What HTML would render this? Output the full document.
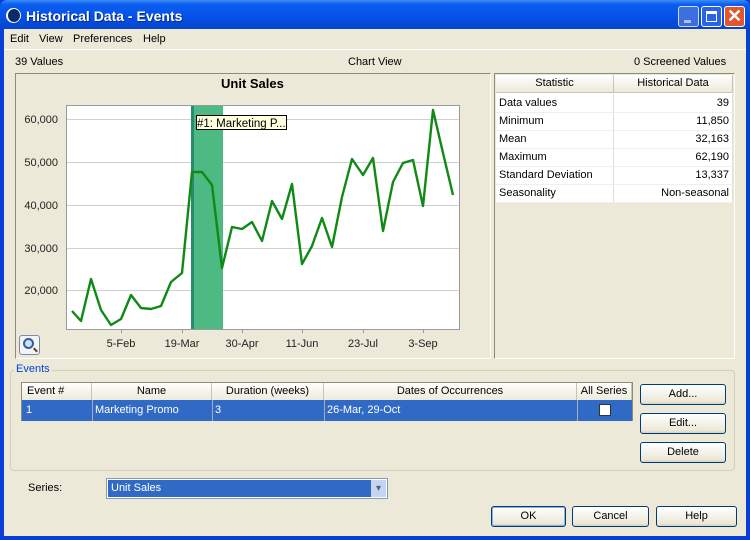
<!DOCTYPE html>
<html><head><style>
*{margin:0;padding:0;box-sizing:border-box}
body{width:750px;height:540px;overflow:hidden;font-family:"Liberation Sans",sans-serif;font-size:11px;color:#000;background:#0a3fd6;position:relative}
.a{position:absolute}
.win{left:4px;top:29px;width:742px;height:507px;background:#ece9d8}
.title{left:0;top:0;width:750px;height:30px;background:linear-gradient(#3d8cf5 0,#0a5ef0 15%,#0550e6 60%,#0443c8 100%);border-radius:7px 7px 0 0}
.btn{background:linear-gradient(#fff,#ece9d8 85%,#d6d0c0);border:1px solid #003c74;border-radius:3px;text-align:center;line-height:18px}
.th{background:linear-gradient(#fff,#ebeadb);border-right:1px solid #c7c5b2;border-bottom:1px solid #c7c5b2;text-align:center;line-height:17px;height:18px;position:absolute;top:0}
td{padding:0 3px;height:18px;border-bottom:1px solid #f0efe8;border-right:1px solid #e0dfd6}
</style></head><body>
<div class="a title"></div>
<div class="a" style="left:6px;top:8px;width:15px;height:15px;border-radius:50%;background:#fff;"></div>
<div class="a" style="left:8px;top:9px;width:12px;height:13px;border-radius:50%;background:#0a2a6a;"></div>
<div class="a" style="left:26px;top:8px;color:#fff;font-size:14px;font-weight:bold;text-shadow:1px 1px #0a2a8a">Historical Data - Events</div>
<div class="a" style="left:678px;top:6px;width:21px;height:21px;border:1px solid #fff;border-radius:3px;background:#4a77e0;opacity:.8"><div class="a" style="left:5px;top:13px;width:7px;height:3px;background:#dde"></div></div>
<div class="a" style="left:701px;top:6px;width:21px;height:21px;border:1px solid #fff;border-radius:3px;background:#2a62e8"><div class="a" style="left:4px;top:4px;width:11px;height:11px;border:1px solid #fff;border-top-width:3px"></div></div>
<div class="a" style="left:724px;top:6px;width:21px;height:21px;border:1px solid #fff;border-radius:3px;background:#e0562f;color:#fff;font-size:18px;font-weight:bold;text-align:center;line-height:19px">✕</div>
<div class="a win"></div>
<div class="a" style="left:10px;top:33px">Edit</div>
<div class="a" style="left:39px;top:33px">View</div>
<div class="a" style="left:73px;top:33px">Preferences</div>
<div class="a" style="left:143px;top:33px">Help</div>
<div class="a" style="left:4px;top:49px;width:742px;height:1px;background:#fff"></div>
<div class="a" style="left:15px;top:56px">39 Values</div>
<div class="a" style="left:348px;top:56px">Chart View</div>
<div class="a" style="left:634px;top:56px">0 Screened Values</div>
<div class="a" style="left:15px;top:73px;width:476px;height:286px;border:1px solid #8d8b7c;border-right-color:#fff;border-bottom-color:#fff"></div>
<div class="a" style="left:221px;top:76px;font-size:13px;font-weight:bold">Unit Sales</div>
<svg class="a" style="left:0;top:0" width="750" height="540">
<rect x="66.5" y="105.5" width="393" height="224" fill="#fff" stroke="#9a9a9a"/>
<g stroke="#d0d0d0"><line x1="67" x2="459" y1="119.5" y2="119.5"/><line x1="67" x2="459" y1="162.5" y2="162.5"/><line x1="67" x2="459" y1="205.5" y2="205.5"/><line x1="67" x2="459" y1="248.5" y2="248.5"/><line x1="67" x2="459" y1="290.5" y2="290.5"/></g>
<rect x="191" y="106" width="32" height="223" fill="#4cba82"/>
<rect x="191" y="106" width="3" height="223" fill="#2a8a70"/>
<g stroke="#9a9a9a"><line x1="121.5" x2="121.5" y1="329" y2="333"/><line x1="182.5" x2="182.5" y1="329" y2="333"/><line x1="242.5" x2="242.5" y1="329" y2="333"/><line x1="302.5" x2="302.5" y1="329" y2="333"/><line x1="363.5" x2="363.5" y1="329" y2="333"/><line x1="423.5" x2="423.5" y1="329" y2="333"/></g>
<polyline fill="none" stroke="#0f8a14" stroke-width="2.4" stroke-linejoin="round" points="72,311 81,321 91,279 101,310 111,325 121,319 131,295 141,308 151,309 161,306 171,282 182,273 192,172 202,172 212,185 222,268 232,227 242,229 252,222 262,241 272,201 282,219 292,184 302,264 312,246 322,218 332,247 342,197 352,159 363,175 373,158 383,231 393,182 403,163 413,160 423,206 433,110 443,153 453,195"/>
<g font-family="Liberation Sans" font-size="11" fill="#222" text-anchor="end"><text x="58" y="123">60,000</text><text x="58" y="166">50,000</text><text x="58" y="209">40,000</text><text x="58" y="252">30,000</text><text x="58" y="294">20,000</text></g>
<g font-family="Liberation Sans" font-size="11" fill="#222" text-anchor="middle"><text x="121" y="347">5-Feb</text><text x="182" y="347">19-Mar</text><text x="242" y="347">30-Apr</text><text x="302" y="347">11-Jun</text><text x="363" y="347">23-Jul</text><text x="423" y="347">3-Sep</text></g>
<rect x="196.5" y="115.5" width="90" height="14" fill="#ffffe0" stroke="#000"/>
<text x="197" y="127" font-family="Liberation Sans" font-size="11.5">#1: Marketing P...</text>
</svg>
<div class="a" style="left:19px;top:335px;width:21px;height:20px;border:1px solid #7a8aa8;border-radius:3px;background:#f4f4f4"><div class="a" style="left:3px;top:2px;width:11px;height:11px;border:2px solid #3060a0;border-radius:50%;background:#cfe0f8"></div><div class="a" style="left:13px;top:13px;width:5px;height:2px;background:#604020;transform:rotate(45deg)"></div></div>
<div class="a" style="left:494px;top:73px;width:241px;height:286px;border:1px solid #8d8b7c;border-right-color:#fff;border-bottom-color:#fff"></div>
<div class="a" style="left:496px;top:75px;width:237px;height:127px;background:#fff">
<div class="th" style="left:0;width:118px">Statistic</div><div class="th" style="left:118px;width:119px">Historical Data</div>
<table class="a" style="top:19px;left:0;width:237px;border-collapse:collapse">
<tr><td style="width:117px">Data values</td><td style="text-align:right">39</td></tr>
<tr><td>Minimum</td><td style="text-align:right">11,850</td></tr>
<tr><td>Mean</td><td style="text-align:right">32,163</td></tr>
<tr><td>Maximum</td><td style="text-align:right">62,190</td></tr>
<tr><td>Standard Deviation</td><td style="text-align:right">13,337</td></tr>
<tr><td>Seasonality</td><td style="text-align:right">Non-seasonal</td></tr>
</table></div>
<div class="a" style="left:10px;top:370px;width:725px;height:101px;border:1px solid #d0d0bf;border-radius:4px"></div>
<div class="a" style="left:14px;top:363px;background:#ece9d8;color:#0046d5;padding:0 2px">Events</div>
<div class="a" style="left:21px;top:382px;width:612px;height:39px;background:#fff;border:1px solid #8d8b7c">
<div class="th" style="left:0;width:70px;text-align:left;padding-left:5px">Event #</div><div class="th" style="left:70px;width:120px">Name</div><div class="th" style="left:190px;width:112px">Duration (weeks)</div><div class="th" style="left:302px;width:253px">Dates of Occurrences</div><div class="th" style="left:555px;width:55px">All Series</div>
<div class="a" style="left:0;top:17px;width:610px;height:21px;background:#316ac5;color:#fff;line-height:20px">
<span class="a" style="left:4px">1</span><span class="a" style="left:73px">Marketing Promo</span><span class="a" style="left:193px">3</span><span class="a" style="left:305px">26-Mar, 29-Oct</span>
<div class="a" style="left:70px;top:0;width:1px;height:21px;background:#aab"></div><div class="a" style="left:190px;top:0;width:1px;height:21px;background:#aab"></div><div class="a" style="left:302px;top:0;width:1px;height:21px;background:#aab"></div><div class="a" style="left:555px;top:0;width:1px;height:21px;background:#aab"></div>
<div class="a" style="left:577px;top:4px;width:12px;height:12px;background:#fff;border:1px solid #333"></div></div>
</div>
<div class="a btn" style="left:640px;top:384px;width:86px;height:21px">Add...</div>
<div class="a btn" style="left:640px;top:413px;width:86px;height:21px">Edit...</div>
<div class="a btn" style="left:640px;top:442px;width:86px;height:21px">Delete</div>
<div class="a" style="left:28px;top:482px">Series:</div>
<div class="a" style="left:106px;top:478px;width:282px;height:21px;border:1px solid #7f9db9;background:#fff"><div class="a" style="left:1px;top:1px;width:263px;height:17px;background:#316ac5;color:#fff;line-height:17px;padding-left:3px">Unit Sales</div><div class="a" style="left:264px;top:1px;width:15px;height:17px;background:#c5d4f0;color:#4d6185;font-size:10px;text-align:center;line-height:17px">▾</div></div>
<div class="a btn" style="left:491px;top:506px;width:75px;height:21px;border-color:#003c74;box-shadow:inset 0 0 0 1px #90b0e8">OK</div>
<div class="a btn" style="left:572px;top:506px;width:77px;height:21px">Cancel</div>
<div class="a btn" style="left:656px;top:506px;width:81px;height:21px">Help</div>
</body></html>
